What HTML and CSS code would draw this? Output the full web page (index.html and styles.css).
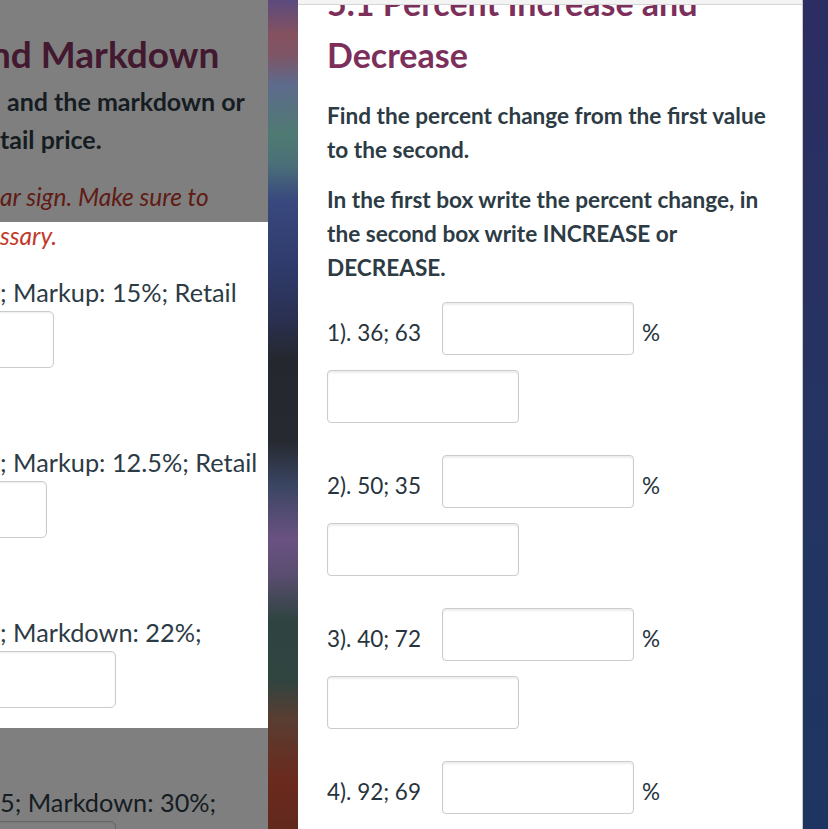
FILE: index.html
```html
<!DOCTYPE html>
<html lang="en">
<head>
<meta charset="utf-8">
<title>5.1 Percent Increase and Decrease</title>
<link rel="stylesheet" href="styles.css">
</head>
<body>
<div class="screen">
  <section class="left-page">
    <div class="left-content">
      <h1 class="left-title">nd Markdown</h1>
      <p class="left-intro"><span class="line ind-and">and the markdown or</span><span class="line">tail price.</span></p>
      <p class="left-note"><span class="line">ar sign. Make sure to</span><span class="line">ssary.</span></p>
      <div class="left-item">
        <div class="left-q">; Markup: 15%; Retail</div>
        <div class="left-box w1"></div>
      </div>
      <div class="left-item">
        <div class="left-q">; Markup: 12.5%; Retail</div>
        <div class="left-box w2"></div>
      </div>
      <div class="left-item">
        <div class="left-q">; Markdown: 22%;</div>
        <div class="left-box w3"></div>
      </div>
      <div class="left-item">
        <div class="left-q">5; Markdown: 30%;</div>
        <div class="left-box w3"></div>
      </div>
    </div>
    <div class="dim dim-top"></div>
    <div class="dim dim-bottom"></div>
  </section>

  <div class="blur-strip"></div>

  <main class="card">
    <div class="card-edge"></div>
    <h2 class="card-title">5.1 Percent Increase and Decrease</h2>
    <p class="card-text">Find the percent change from the first value to the second.</p>
    <p class="card-text">In the first box write the percent change, in the second box write INCREASE or DECREASE.</p>
    <ol class="questions">
      <li class="question">
        <div class="q-row">
          <span class="q-label">1). 36; 63</span>
          <span class="answer"></span>
          <span class="pct">%</span>
        </div>
        <span class="answer answer-word"></span>
      </li>
      <li class="question">
        <div class="q-row">
          <span class="q-label">2). 50; 35</span>
          <span class="answer"></span>
          <span class="pct">%</span>
        </div>
        <span class="answer answer-word"></span>
      </li>
      <li class="question">
        <div class="q-row">
          <span class="q-label">3). 40; 72</span>
          <span class="answer"></span>
          <span class="pct">%</span>
        </div>
        <span class="answer answer-word"></span>
      </li>
      <li class="question">
        <div class="q-row">
          <span class="q-label">4). 92; 69</span>
          <span class="answer"></span>
          <span class="pct">%</span>
        </div>
        <span class="answer answer-word"></span>
      </li>
    </ol>
  </main>

  <div class="navy"></div>
</div>
</body>
</html>
```
FILE: styles.css
```css
* { box-sizing: border-box; }
html, body { margin: 0; padding: 0; }
body {
  width: 828px;
  height: 829px;
  overflow: hidden;
  font-family: Lato, "Noto Sans", sans-serif;
  color: #2d3b45;
  background: #1f3360;
}
.screen {
  display: flex;
  width: 828px;
  height: 829px;
  overflow: hidden;
}

/* ---------- left dimmed page ---------- */
.left-page {
  position: relative;
  flex: 0 0 268px;
  height: 829px;
  overflow: hidden;
  background: #ffffff;
}
.left-content {
  padding-top: 32px;
  white-space: nowrap;
}
.left-title {
  margin: 0 0 0 -10px;
  font-size: 37px;
  line-height: 44px;
  font-weight: 700;
  color: #84335f;
}
.left-intro {
  margin: 6px 0 0 0;
  font-size: 25px;
  line-height: 38px;
  font-weight: 700;
  color: #2d3b45;
}
.line { display: block; }
.ind-and { padding-left: 7px; }
.left-note {
  margin: 19px 0 0 0;
  font-size: 24.5px;
  line-height: 39px;
  font-style: italic;
  color: #c0392b;
}
.left-item {
  margin-top: 19px;
}
.left-item + .left-item { margin-top: 76px; }
.left-q {
  font-size: 25.3px;
  line-height: 36px;
  color: #2d3b45;
}
.left-box {
  margin-top: 1px;
  margin-left: -20px;
  height: 57px;
  border: 1px solid #c7cdd1;
  border-radius: 5px;
  box-shadow: inset 0 1px 2px rgba(0,0,0,0.08);
  background: #fff;
}
.w1 { width: 74px; }
.w2 { width: 67px; }
.w3 { width: 136px; }

.dim {
  position: absolute;
  left: 0;
  right: 0;
  background: rgba(0, 0, 0, 0.5);
}
.dim-top { top: 0; height: 222px; }
.dim-bottom { top: 728px; bottom: 0; }

/* ---------- blurred strip ---------- */
.blur-strip {
  flex: 0 0 30px;
  height: 829px;
  background: linear-gradient(to bottom,
    #5b4a7e 0px,
    #85525f 35px,
    #7e5566 55px,
    #5d6b8c 85px,
    #4f7a72 135px,
    #4a6f78 165px,
    #39487e 200px,
    #2e3a6a 270px,
    #2a3050 320px,
    #25272e 360px,
    #26292f 440px,
    #3a4562 485px,
    #6a5282 540px,
    #5a4d70 575px,
    #2f4441 620px,
    #304440 680px,
    #5a3d31 720px,
    #6b2a1e 780px,
    #62281c 829px);
}

/* ---------- right card ---------- */
.card {
  position: relative;
  flex: 0 0 505px;
  height: 829px;
  overflow: hidden;
  background: #ffffff;
  border-right: 1px solid #c9c9c9;
  padding: 0 27px 0 29px;
}
.card-edge {
  position: absolute;
  left: 0;
  right: 0;
  top: 0;
  height: 5px;
  background: #f3f3f3;
  border-bottom: 1px solid #d6d6d6;
}
.card-title {
  margin: -23px 0 0 0;
  font-size: 34px;
  line-height: 52px;
  font-weight: 700;
  color: #7c2f5b;
}
.card-text {
  margin: 18px 0 0 0;
  font-size: 22.6px;
  line-height: 34px;
  font-weight: 700;
  color: #2d3b45;
}
.card-text + .card-text { margin-top: 16px; }

.questions {
  list-style: none;
  margin: 17px 0 0 0;
  padding: 0;
}
.question {
  display: flex;
  flex-direction: column;
  align-items: flex-start;
}
.question + .question { margin-top: 32px; }
.q-row {
  display: flex;
  align-items: flex-start;
}
.q-label {
  font-size: 22.5px;
  line-height: 34px;
  margin-top: 14px;
  width: 115px;
  color: #27343d;
}
.answer {
  display: block;
  width: 192px;
  height: 53px;
  border: 1px solid #c7cdd1;
  border-radius: 4px;
  background: #fff;
  box-shadow: inset 0 2px 2px rgba(0,0,0,0.07);
}
.pct {
  font-size: 22.5px;
  line-height: 34px;
  margin-top: 14px;
  margin-left: 8px;
  color: #27343d;
}
.answer-word { margin-top: 15px; }

/* ---------- right navy edge ---------- */
.navy {
  flex: 1 1 auto;
  height: 829px;
  background: linear-gradient(to bottom, #2c2d62, #253462 50%, #1d3661);
}
```
